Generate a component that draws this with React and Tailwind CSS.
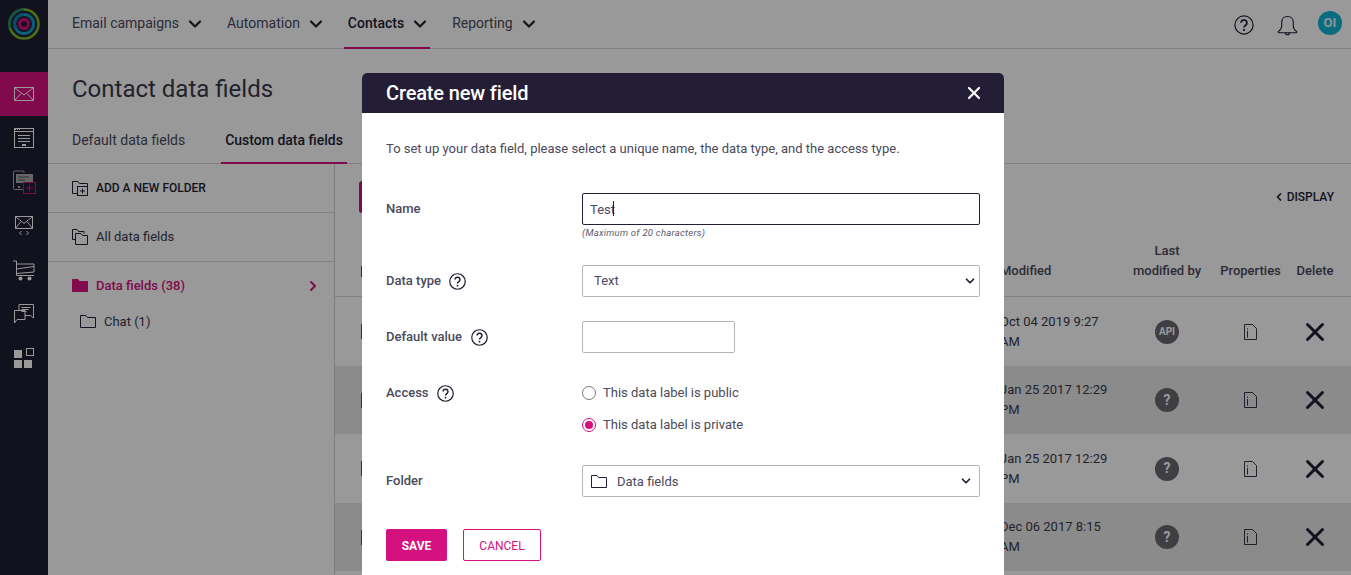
import { ChevronDown, ChevronRight, ChevronLeft, X } from 'lucide-react';

const fontStack = { fontFamily: 'Roboto, sans-serif' };

const Logo = () => (
  <svg width="34" height="34" viewBox="0 0 34 34" fill="none">
    <circle cx="17" cy="17" r="14.5" stroke="#7cb82a" strokeWidth="2.6" />
    <path d="M3 21A14.5 14.5 0 0 1 17 2.5" stroke="#1a8a70" strokeWidth="2.6" />
    <circle cx="17" cy="17" r="9.5" stroke="#0f9ec6" strokeWidth="3" />
    <path d="M9 22A9.5 9.5 0 0 1 17 7.5" stroke="#0d80ac" strokeWidth="3" />
    <circle cx="17" cy="17" r="4.5" stroke="#d0107f" strokeWidth="3.4" />
  </svg>
);

const MailIcon = () => (
  <svg width="20" height="14" viewBox="0 0 20 14" fill="none" stroke="#fff" strokeWidth="1">
    <rect x="0.5" y="0.5" width="19" height="13" />
    <path d="M0.5 0.5L10 8l9.5-7.5M0.5 13.5L7 6.5M19.5 13.5L13 6.5" />
  </svg>
);

const NewsletterIcon = () => (
  <svg width="20" height="20" viewBox="0 0 20 20" fill="none" stroke="#fff" strokeWidth="1">
    <rect x="0.5" y="0.5" width="19" height="19" />
    <path d="M0 3.5h20" />
    <rect x="1" y="1" width="1" height="1" fill="#fff" stroke="none" />
    <rect x="3" y="1" width="1" height="1" fill="#fff" stroke="none" />
    <rect x="5" y="1" width="1" height="1" fill="#fff" stroke="none" />
    <path d="M4 7.5h12M4 10.5h12M4 13.5h12" />
    <rect x="8" y="16" width="4" height="2" fill="#fff" stroke="none" />
  </svg>
);

const FormAddIcon = () => (
  <svg width="24" height="24" viewBox="0 0 24 24" fill="none">
    <path d="M13 19.5H2.5a1 1 0 0 1-1-1V2a1 1 0 0 1 1-1H11a1 1 0 0 1 1 1v1" stroke="#aaa" />
    <rect x="4" y="4" width="17" height="9" fill="#aaa" />
    <path d="M6 7h11M6 10h7" stroke="#555" />
    <rect x="6" y="16" width="2" height="2" fill="#aaa" />
    <rect x="11.5" y="12.5" width="12" height="11" fill="#1f1d33" stroke="#d5117f" />
    <path d="M17.5 14.5v7M14 18h7" stroke="#d5117f" strokeWidth="1.2" />
  </svg>
);

const MailCodeIcon = () => (
  <svg width="20" height="20" viewBox="0 0 20 20" fill="none" stroke="#fff" strokeWidth="1">
    <rect x="1.5" y="0.5" width="17" height="12" />
    <path d="M1.5 0.5L10 7.5l8.5-7M1.5 12.5L7 5.5M18.5 12.5L13 5.5" />
    <path d="M7.5 15l-2 2 2 2M12.5 15l2 2-2 2" />
  </svg>
);

const CartIcon = () => (
  <svg width="22" height="21" viewBox="0 0 22 21" fill="none" stroke="#fff" strokeWidth="1">
    <path d="M0 1h3.5v14.5H21M3.5 4H21v8L3.5 13.5M3.5 9L21 6.5" />
    <circle cx="7.5" cy="18.5" r="2" fill="#fff" stroke="none" />
    <circle cx="16.5" cy="18.5" r="2" fill="#fff" stroke="none" />
  </svg>
);

const ChatIcon = () => (
  <svg width="20" height="20" viewBox="0 0 20 20" fill="none" stroke="#fff" strokeWidth="1">
    <path d="M5 6V0.5h14.5v13.5l-3-2.5H11" />
    <path d="M0.5 6.5h10.500v9H3l-2.500 3.500z" />
    <path d="M7.5 3.5h9M7.5 5.5h7M7.5 7.5h5" />
  </svg>
);

const WidgetsIcon = () => (
  <svg width="20" height="20" viewBox="0 0 20 20" fill="#fff">
    <rect y="2" width="8" height="8" />
    <rect y="12" width="8" height="8" />
    <rect x="10" y="12" width="8" height="8" />
    <rect x="12.5" y="0.5" width="7" height="7" fill="none" stroke="#fff" />
  </svg>
);

const QuestionCircle = ({ size = 17, stroke = 1.3 }) => (
  <svg width={size} height={size} viewBox="0 0 18 18" fill="none" className="shrink-0">
    <circle cx="9" cy="9" r="8.2" stroke="#231f36" strokeWidth={stroke} />
    <path d="M6.4 7a2.6 2.6 0 1 1 4 2.2c-.9.6-1.4 1-1.4 2" stroke="#231f36" strokeWidth="1.6" />
    <circle cx="9" cy="13.4" r="1" fill="#231f36" />
  </svg>
);

const Bell = () => (
  <svg width="21" height="21" viewBox="0 0 21 21" fill="none" stroke="#231f36" strokeWidth="1.1">
    <path d="M10.5 1.5c-3.5 0-5.8 2.6-5.8 6v3.5c0 2.4-1.3 4-3 5.2-.8.6-.4 1.6.4 1.6h16.8c.8 0 1.2-1 .4-1.6-1.7-1.2-3-2.8-3-5.2V7.5c0-3.4-2.3-6-5.8-6z" />
    <path d="M8.5 17.5c0 1.5 1 2.3 2 2.3s2-.8 2-2.3" />
  </svg>
);

const Folder = ({ fill = 'none', stroke = '#231f36' }) => (
  <svg width="16" height="13" viewBox="0 0 16 13" fill={fill} stroke={stroke} className="shrink-0">
    <path d="M0.5 12.5V0.5H6l1.5 2h8v10z" />
  </svg>
);

const FolderAdd = () => (
  <svg width="16" height="15" viewBox="0 0 16 15" fill="none" stroke="#231f36" className="shrink-0">
    <path d="M5.5 12.5h-5V0.5H6l1.5 2h8v3" />
    <rect x="5.5" y="5.5" width="10" height="9" />
    <path d="M10.5 7.5v5M8 10h5" />
  </svg>
);

const FoldersIcon = () => (
  <svg width="16" height="16" viewBox="0 0 16 16" fill="none" stroke="#231f36" className="shrink-0">
    <path d="M3 10.5H0.5V0.5H5l1.5 2H12v2" />
    <path d="M3.5 15.5V4.5H9l1.5 2h5v9z" />
  </svg>
);

const FileInfo = () => (
  <svg width="13" height="16" viewBox="0 0 13 16" fill="none" stroke="#231f36" strokeWidth="0.9">
    <path d="M0.5 0.5h8l4 4v11h-12z" />
    <path d="M3.5 7v6.500" />
    <path d="M3.5 4.500v1.200" />
  </svg>
);

const navItems = [
  { label: 'Email campaigns' },
  { label: 'Automation' },
  { label: 'Contacts', active: true },
  { label: 'Reporting' },
];

const sideIcons = [
  { icon: <MailIcon />, active: true },
  { icon: <NewsletterIcon /> },
  { icon: <FormAddIcon /> },
  { icon: <MailCodeIcon /> },
  { icon: <CartIcon /> },
  { icon: <ChatIcon /> },
  { icon: <WidgetsIcon /> },
];

const rows = [
  { date: 'Oct 04 2019 9:27', ampm: 'AM', by: 'API', h: 'h-[69px]' },
  { date: 'Jan 25 2017 12:29', ampm: 'PM', by: '?', h: 'h-[68px]', striped: true },
  { date: 'Jan 25 2017 12:29', ampm: 'PM', by: '?', h: 'h-[69px]' },
  { date: 'Dec 06 2017 8:15', ampm: 'AM', by: '?', h: 'h-[68px]', striped: true },
];

const TableRow = ({ row }) => (
  <div className={`${row.h} flex items-center shrink-0 ${row.striped ? 'bg-[#e8e8e8]' : ''}`}>
    <div className="w-[2px] h-[15px] bg-[#555] ml-[26px]" />
    <div className="ml-[637px] w-[129px] text-[13px] leading-5 text-[#3a3a4c]">
      {row.date}
      <br />
      {row.ampm}
    </div>
    <div className="w-[76px] flex justify-center">
      <span className={`w-6 h-6 rounded-full bg-[#6a6a70] flex items-center justify-center font-bold text-white ${row.by === 'API' ? 'text-[10px]' : 'text-[14px]'}`}>
        {row.by}
      </span>
    </div>
    <div className="w-[91px] flex justify-center">
      <FileInfo />
    </div>
    <div className="w-[38px] flex justify-center">
      <X size={30} strokeWidth={2.4} className="text-[#231f36] shrink-0" />
    </div>
  </div>
);

const Field = ({ label, help, helpGap = 'ml-2', top, children }) => (
  <div className={`flex ${top}`}>
    <div className="w-[196px] h-8 flex items-center text-[13px] font-medium text-[#4a4a5c]">
      {label}
      {help && (
        <span className={helpGap}>
          <QuestionCircle />
        </span>
      )}
    </div>
    <div className="flex-1">{children}</div>
  </div>
);

const Radio = ({ label, checked }) => (
  <div className="flex items-center h-4 text-[13px] text-[#4a4a5c]">
    <span className={`w-[14px] h-[14px] rounded-full border flex items-center justify-center mr-[7px] ${checked ? 'border-[#d5117f]' : 'border-[#777]'}`}>
      {checked && <span className="w-2 h-2 rounded-full bg-[#d5117f]" />}
    </span>
    {label}
  </div>
);

export default function App() {
  return (
    <div className="relative h-screen w-full overflow-hidden flex bg-white text-[#231f36]" style={fontStack}>
      {/* sidebar */}
      <aside className="w-12 shrink-0 bg-[#1f1d33] flex flex-col items-center">
        <div className="h-[72px] w-full flex justify-center pt-[7px]">
          <Logo />
        </div>
        {sideIcons.map((item, i) => (
          <div key={i} className={`h-11 w-full flex items-center justify-center ${item.active ? 'bg-[#d5117f]' : ''}`}>
            {item.icon}
          </div>
        ))}
      </aside>

      <div className="flex-1 min-w-0 flex flex-col">
        {/* top nav */}
        <header className="h-[49px] shrink-0 border-b border-[#d9d9d9] flex items-stretch pl-5 pr-[9px]">
          <nav className="flex gap-[18px]">
            {navItems.map((item) => (
              <div
                key={item.label}
                className={`relative flex items-center gap-[10px] px-1 pb-[2px] text-[14px] ${item.active ? 'font-medium text-[#231f36]' : 'text-[#4a4a5c]'}`}
              >
                {item.label}
                <ChevronDown size={20} strokeWidth={2.6} className="text-[#231f36] -mx-[4px] mt-[2px]" />
                {item.active && <span className="absolute left-0 right-0 -bottom-px h-[2px] bg-[#d5117f]" />}
              </div>
            ))}
          </nav>
          <div className="ml-auto flex items-center">
            <span className="mt-[2px]">
              <QuestionCircle size={20} stroke={1.1} />
            </span>
            <span className="ml-[23px] mt-[2px]">
              <Bell />
            </span>
            <span className="ml-5 mb-[2px] w-6 h-6 rounded-full bg-[#10b4d4] text-white/90 text-[13px] font-bold flex items-center justify-center">
              OI
            </span>
          </div>
        </header>

        {/* page head */}
        <div className="h-[115px] shrink-0 border-b border-[#d9d9d9] pl-6 flex flex-col">
          <h1 className="mt-[24px] text-[24px] leading-8 text-[#3a3a4c]">Contact data fields</h1>
          <div className="mt-auto flex gap-8 -ml-1 text-[14px]">
            <div className="px-1 h-[33px] text-[#4a4a5c]">Default data fields</div>
            <div className="relative px-1 h-[33px] font-medium">
              Custom data fields
              <span className="absolute left-0 right-0 -bottom-px h-[2px] bg-[#d5117f]" />
            </div>
          </div>
        </div>

        <div className="flex-1 min-h-0 flex">
          {/* folder panel */}
          <div className="w-[287px] shrink-0 border-r border-[#d0d0d0] pl-6">
            <div className="-ml-6 pl-6 h-[49px] border-b border-[#d9d9d9] flex items-center gap-2 text-[12px] font-medium">
              <FolderAdd />
              ADD A NEW FOLDER
            </div>
            <div className="-ml-6 pl-6 h-[49px] border-b border-[#d9d9d9] flex items-center gap-2 text-[13px] text-[#3a3a4c]">
              <FoldersIcon />
              All data fields
            </div>
            <div className="h-[47px] flex items-center gap-2 text-[13px] font-medium text-[#d5117f] pr-[13px]">
              <Folder fill="#d5117f" stroke="#d5117f" />
              Data fields (38)
              <ChevronRight size={16} strokeWidth={3} className="ml-auto" />
            </div>
            <div className="pl-2 h-[25px] flex items-center gap-2 text-[13px] text-[#3a3a4c]">
              <Folder />
              Chat (1)
            </div>
          </div>

          {/* table area */}
          <div className="flex-1 min-w-0 flex flex-col">
            <div className="h-[71px] shrink-0 flex pt-[17px]">
              <div className="w-[40px] h-8 bg-[#d5117f] rounded-[3px] ml-6" />
              <div className="ml-auto mr-[17px] h-5 mt-[6px] flex items-center text-[12px] font-medium">
                <ChevronLeft size={12} strokeWidth={3.5} />
                <span className="ml-[2px]">DISPLAY</span>
              </div>
            </div>
            <div className="h-[62px] shrink-0 border-b border-[#d9d9d9] flex items-end pb-[15px] text-[13px] font-medium text-[#4a4a5c] leading-5">
              <div className="w-[2px] h-[11px] bg-[#555] ml-[26px] mb-[4px]" />
              <div className="ml-[637px] w-[129px]">Modified</div>
              <div className="w-[76px] text-center whitespace-nowrap">
                Last
                <br />
                modified by
              </div>
              <div className="w-[91px] text-center whitespace-nowrap">Properties</div>
              <div className="w-[38px] text-center">Delete</div>
            </div>
            {rows.map((row, i) => (
              <TableRow key={i} row={row} />
            ))}
          </div>
        </div>
      </div>

      {/* backdrop */}
      <div className="absolute inset-0 bg-black/40" />

      {/* dialog */}
      <div className="absolute left-[362px] top-[73px] w-[642px] h-[540px] bg-white rounded-t-[5px]">
        <div className="h-10 bg-[#231e36] rounded-t-[5px] flex items-center justify-between pl-6 pr-5 text-white">
          <h2 className="text-[20px] font-medium tracking-[-0.15px]">Create new field</h2>
          <X size={20} strokeWidth={2.6} />
        </div>
        <div className="px-6">
          <p className="mt-[28px] h-4 leading-4 text-[13px] text-[#4a4a5c]">
            To set up your data field, please select a unique name, the data type, and the access type.
          </p>
          <Field label="Name" top="mt-9">
            <div className="relative">
              <input
                readOnly
                value="Test"
                className="block w-full h-8 border border-[#231f36] rounded-[2px] px-[7px] text-[13px] text-[#4a4a5c] outline-none"
              />
              <span className="absolute left-[31px] top-[8px] w-px h-[15px] bg-[#231f36]" />
            </div>
            <p className="mt-[2px] text-[9.5px] leading-3 italic text-[#5a5a6c] tracking-[0.25px]">(Maximum of 20 characters)</p>
          </Field>
          <Field label="Data type" help top="mt-[26px]">
            <div className="relative">
              <select className="block w-full h-8 appearance-none border border-[#b5b5b5] rounded-[2px] px-[11px] text-[13px] text-[#4a4a5c] bg-white outline-none">
                <option>Text</option>
              </select>
              <ChevronDown size={14} strokeWidth={3} className="absolute right-[3px] top-[9px] text-[#231f36]" />
            </div>
          </Field>
          <Field label="Default value" help helpGap="ml-[9px]" top="mt-6">
            <input readOnly className="block w-[153px] h-8 border border-[#b5b5b5] rounded-[2px] outline-none" />
          </Field>
          <div className="flex mt-6">
            <div className="w-[196px] h-8 flex items-center text-[13px] font-medium text-[#4a4a5c]">
              Access
              <span className="ml-2">
                <QuestionCircle />
              </span>
            </div>
            <div className="pt-2 flex flex-col gap-4">
              <Radio label="This data label is public" />
              <Radio label="This data label is private" checked />
            </div>
          </div>
          <Field label="Folder" top="mt-8">
            <div className="h-8 border border-[#b5b5b5] rounded-[2px] flex items-center pl-2 pr-[6px] text-[13px] text-[#4a4a5c]">
              <Folder />
              <span className="ml-[10px] pt-[1px]">Data fields</span>
              <ChevronDown size={14} strokeWidth={3} className="ml-auto text-[#231f36]" />
            </div>
          </Field>
          <div className="mt-8 flex gap-4">
            <button className="w-[61px] h-8 pt-[1px] bg-[#d5117f] rounded-[2px] text-white text-[12px] font-bold">SAVE</button>
            <button className="w-[78px] h-8 pt-[1px] border border-[#d5117f] rounded-[2px] text-[#d5117f] text-[12px]">CANCEL</button>
          </div>
        </div>
      </div>
    </div>
  );
}
